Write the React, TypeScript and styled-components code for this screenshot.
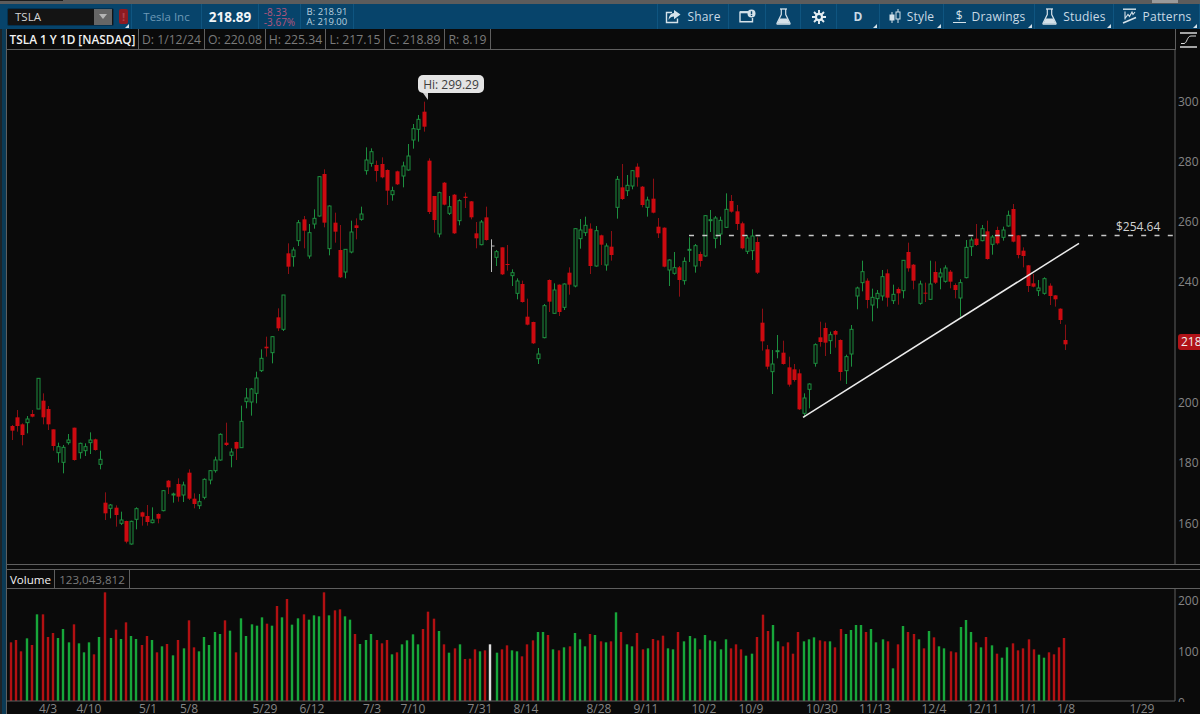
import React from "react";
import styled, { createGlobalStyle } from "styled-components";

type Kind = "g" | "r" | "w";
type CandleRow = [number, Kind, number, number, number, number];
type VolumeRow = [number, Kind, number];

// rows are read off 3x crops: [x, colour, high, body top, body bottom, low]
const scaleCandles = (ox: number, oy: number, rows: CandleRow[]) =>
  rows.map(([x, kind, hi, top, bot, lo]) => ({
    x: Math.round(ox + x / 3) + 0.5,
    kind,
    hi: oy + hi / 3,
    top: oy + top / 3,
    bot: oy + bot / 3,
    lo: oy + lo / 3,
  }));

const scaleVolume = (ox: number, oy: number, rows: VolumeRow[]) =>
  rows.map(([x, kind, top]) => ({
    x: Math.round(ox + x / 3),
    kind,
    top: oy + top / 3,
  }));

const candles = [
  ...scaleCandles(0, 360, [
    [35, "r", 195, 198, 212, 240], [51, "r", 150, 172, 198, 215], [66, "r", 190, 193, 225, 256],
    [82, "g", 168, 177, 188, 220], [97, "r", 150, 162, 170, 172], [113, "g", 55, 55, 147, 147],
    [128, "r", 100, 122, 172, 193], [144, "r", 138, 147, 193, 210], [159, "r", 208, 208, 258, 272],
    [174, "g", 248, 260, 278, 308], [190, "g", 255, 262, 307, 340], [205, "g", 222, 240, 248, 254],
    [221, "r", 203, 203, 300, 302], [239, "g", 248, 250, 278, 296], [254, "g", 250, 260, 272, 288],
    [269, "g", 217, 240, 248, 282], [285, "r", 236, 238, 270, 272], [300, "g", 272, 298, 313, 328],
    [316, "r", 397, 428, 460, 480], [331, "g", 432, 435, 445, 475], [347, "r", 436, 443, 465, 500],
    [362, "g", 455, 480, 490, 495], [378, "r", 482, 483, 545, 550], [393, "g", 482, 484, 552, 554],
    [408, "g", 442, 446, 478, 508], [427, "r", 455, 457, 470, 497], [442, "r", 435, 468, 486, 497],
    [457, "g", 442, 480, 488, 490], [473, "r", 460, 462, 476, 490], [489, "g", 390, 392, 452, 454],
    [504, "r", 360, 362, 382, 402], [519, "g", 398, 402, 405, 428], [534, "r", 355, 372, 410, 425],
    [550, "g", 365, 375, 405, 426], [566, "r", 328, 338, 416, 420], [581, "r", 400, 416, 432, 445],
    [597, "g", 402, 425, 437, 447], [612, "g", 355, 358, 412, 418], [630, "g", 330, 332, 360, 373],
    [646, "g", 290, 300, 332, 338], [661, "g", 220, 223, 300, 302], [677, "r", 188, 248, 255, 258],
    [692, "g", 265, 276, 286, 322], [708, "r", 245, 246, 266, 300], [723, "g", 137, 184, 263, 264],
    [738, "g", 84, 114, 125, 145], [753, "g", 84, 87, 126, 167], [769, "g", 35, 54, 100, 130],
  ]),
  ...scaleCandles(240, 230, [
    [64, "g", 358, 385, 422, 426], [79, "r", 320, 350, 355, 380], [97, "g", 318, 320, 368, 400],
    [113, "r", 235, 262, 295, 303], [128, "g", 195, 195, 298, 303],
  ]),
  ...scaleCandles(220, 70, [
    [204, "r", 520, 550, 590, 612], [220, "g", 532, 540, 560, 590], [235, "g", 450, 458, 512, 528],
    [251, "r", 438, 448, 482, 535], [266, "g", 462, 488, 558, 566], [282, "g", 418, 445, 462, 476],
    [297, "g", 318, 320, 438, 440], [313, "r", 298, 312, 458, 472], [328, "g", 406, 408, 536, 556],
    [344, "r", 428, 458, 485, 518], [360, "r", 465, 540, 622, 624], [376, "g", 538, 538, 606, 625],
    [392, "g", 452, 486, 546, 550], [407, "r", 445, 466, 474, 508], [423, "g", 410, 432, 448, 452],
    [438, "g", 232, 270, 302, 314], [454, "g", 235, 245, 280, 290], [469, "r", 272, 285, 303, 335],
    [485, "r", 262, 282, 322, 325], [500, "r", 298, 300, 362, 405], [515, "g", 350, 362, 374, 392],
    [531, "r", 302, 304, 343, 345], [548, "g", 275, 288, 318, 352], [564, "g", 222, 258, 300, 302],
    [579, "g", 162, 176, 210, 236], [595, "g", 135, 148, 178, 215], [611, "r", 95, 125, 170, 185],
    [627, "r", 265, 272, 426, 432], [642, "r", 378, 378, 450, 488], [657, "g", 365, 368, 492, 502],
    [672, "r", 336, 338, 404, 406], [687, "g", 378, 410, 430, 435], [703, "r", 372, 374, 490, 492],
    [718, "g", 388, 392, 452, 466], [736, "r", 368, 380, 384, 414], [752, "r", 393, 394, 442, 448],
    [767, "r", 456, 490, 505, 535], [783, "g", 450, 456, 524, 526], [798, "r", 410, 442, 510, 512],
  ]),
  ...scaleCandles(480, 150, [
    [33, "w", 268, 288, 288, 366], [49, "g", 300, 305, 322, 348], [65, "r", 292, 292, 373, 375],
    [80, "r", 285, 342, 345, 362], [95, "g", 358, 368, 377, 408], [111, "g", 385, 393, 430, 448],
    [127, "r", 392, 402, 456, 458], [142, "r", 446, 500, 524, 526], [160, "r", 515, 516, 580, 582],
    [175, "g", 594, 612, 626, 642], [191, "g", 462, 467, 563, 565], [206, "r", 388, 390, 455, 486],
    [222, "g", 400, 420, 490, 492], [238, "r", 403, 404, 486, 498], [253, "g", 400, 402, 472, 480],
    [268, "r", 352, 368, 404, 434], [284, "g", 235, 236, 408, 412], [299, "g", 207, 240, 266, 296],
    [315, "g", 200, 226, 248, 258], [330, "r", 220, 236, 348, 372], [348, "g", 228, 242, 348, 350],
    [364, "r", 254, 256, 284, 345], [379, "g", 280, 288, 345, 362], [394, "r", 243, 290, 315, 332],
    [410, "g", 78, 88, 172, 206], [425, "r", 42, 112, 147, 150], [440, "g", 75, 106, 122, 138],
    [456, "g", 60, 62, 108, 118], [471, "r", 40, 50, 82, 110], [487, "r", 108, 110, 165, 172],
    [502, "g", 140, 150, 172, 200], [518, "r", 86, 146, 188, 190], [535, "r", 204, 230, 250, 264],
    [551, "r", 232, 233, 350, 352], [567, "g", 328, 330, 360, 408], [582, "g", 306, 353, 370, 374],
    [597, "r", 348, 352, 390, 440], [613, "g", 322, 334, 392, 404], [628, "g", 262, 298, 301, 336],
    [644, "g", 282, 287, 348, 368], [659, "r", 305, 312, 333, 350], [675, "g", 195, 197, 318, 320],
    [690, "g", 180, 209, 212, 246], [705, "g", 198, 204, 265, 295], [720, "g", 200, 211, 252, 285],
    [738, "g", 130, 178, 232, 234], [754, "r", 135, 153, 185, 188], [770, "r", 165, 184, 222, 240],
    [785, "r", 215, 220, 295, 298], [800, "g", 255, 264, 304, 312], [816, "g", 238, 258, 302, 330],
    [832, "r", 262, 276, 368, 372],
  ]),
  ...scaleCandles(740, 190, [
    [67, "r", 356, 398, 454, 482], [82, "r", 465, 478, 530, 538], [97, "g", 480, 522, 545, 612],
    [112, "g", 435, 482, 484, 505], [128, "r", 452, 488, 522, 524], [147, "r", 500, 532, 584, 590],
    [162, "r", 522, 538, 570, 575], [178, "r", 538, 550, 658, 660], [193, "g", 610, 624, 670, 682],
    [208, "g", 580, 582, 598, 655], [224, "g", 460, 464, 520, 530], [240, "r", 395, 442, 456, 470],
    [255, "r", 398, 414, 458, 498], [270, "g", 425, 434, 452, 492], [286, "r", 420, 423, 434, 473],
    [301, "r", 448, 450, 546, 572], [317, "g", 494, 500, 542, 582], [332, "g", 405, 418, 492, 530],
    [350, "g", 290, 294, 318, 358], [365, "g", 212, 245, 278, 304], [381, "r", 265, 272, 330, 355],
    [396, "g", 296, 322, 345, 394], [411, "g", 300, 310, 326, 355], [427, "g", 240, 260, 318, 332],
    [442, "r", 238, 250, 323, 350], [458, "g", 284, 313, 332, 342], [473, "r", 292, 297, 310, 344],
    [489, "g", 210, 211, 302, 325], [505, "r", 158, 186, 235, 245], [520, "r", 222, 224, 272, 298],
    [539, "g", 272, 282, 340, 344], [554, "r", 278, 308, 310, 336], [569, "g", 212, 282, 328, 330],
    [584, "r", 214, 246, 278, 282], [600, "g", 235, 249, 261, 298], [615, "g", 226, 234, 274, 278],
    [630, "r", 240, 245, 275, 295], [646, "r", 280, 285, 300, 325], [661, "g", 268, 278, 324, 380],
    [677, "g", 150, 172, 263, 265], [692, "g", 142, 150, 170, 198], [708, "r", 102, 146, 165, 168],
    [726, "g", 105, 116, 152, 154], [741, "r", 92, 124, 207, 209], [757, "g", 135, 141, 163, 194],
    [772, "r", 110, 120, 160, 164], [788, "g", 110, 120, 142, 152], [803, "g", 62, 76, 108, 110],
    [819, "r", 42, 57, 155, 157], [835, "r", 135, 136, 195, 205], [850, "r", 172, 182, 198, 232],
    [865, "r", 225, 226, 288, 306], [880, "r", 252, 280, 290, 292],
  ]),
  ...scaleCandles(900, 190, [
    [415, "g", 270, 294, 302, 318], [431, "g", 262, 266, 310, 314], [449, "r", 280, 287, 318, 345],
    [465, "r", 315, 316, 328, 350], [480, "r", 355, 356, 390, 402], [495, "r", 404, 450, 463, 480],
  ]),
];

const volumes = [
  ...scaleVolume(0, 560, [
    [33, "r", 247], [48, "r", 240], [64, "r", 274], [80, "g", 235], [95, "r", 255], [110, "g", 163],
    [129, "r", 163], [144, "r", 231], [160, "r", 219], [175, "g", 234], [190, "g", 207], [206, "g", 247],
    [222, "r", 193], [237, "g", 250], [252, "g", 277], [267, "g", 247], [283, "r", 283], [298, "g", 231],
    [314, "r", 97], [333, "g", 234], [348, "r", 209], [364, "g", 237], [379, "r", 187], [394, "g", 228],
    [409, "g", 237], [425, "r", 255], [440, "r", 228], [455, "g", 240], [471, "r", 277], [487, "g", 259],
    [502, "r", 252], [520, "g", 286], [535, "r", 240], [551, "g", 265], [566, "r", 181], [582, "r", 262],
    [597, "g", 274], [613, "g", 231], [628, "g", 255], [644, "g", 216], [659, "g", 222], [674, "r", 181],
    [690, "g", 212], [708, "r", 277], [724, "g", 175], [739, "g", 228], [755, "g", 193], [770, "g", 197],
    [785, "g", 172], [801, "r", 191], [816, "g", 197], [831, "r", 138], [847, "g", 172], [862, "r", 117],
    [877, "g", 194], [893, "g", 175], [911, "r", 163], [927, "g", 179], [942, "g", 166], [957, "g", 169],
    [973, "r", 97], [988, "g", 166], [1004, "r", 151], [1019, "r", 148], [1035, "g", 169], [1050, "g", 179],
    [1065, "r", 222], [1081, "g", 252], [1099, "g", 240], [1114, "g", 222], [1130, "r", 240], [1145, "r", 250],
    [1161, "r", 240], [1176, "g", 283], [1191, "r", 277],
  ]),
  ...scaleVolume(400, 580, [
    [7, "g", 193], [22, "g", 181], [38, "g", 163], [53, "g", 193], [68, "r", 147], [83, "r", 95],
    [102, "r", 116], [117, "g", 153], [133, "r", 193], [148, "g", 218], [164, "r", 205], [179, "g", 193],
    [195, "r", 237], [210, "r", 236], [226, "r", 208], [241, "g", 214], [256, "r", 211], [271, "w", 193],
    [291, "g", 218], [306, "r", 208], [321, "r", 196], [337, "g", 211], [352, "g", 214], [367, "r", 229],
    [382, "r", 193], [398, "r", 181], [413, "g", 156], [429, "g", 156], [444, "r", 165], [460, "g", 208],
    [478, "r", 211], [493, "g", 202], [509, "r", 199], [524, "g", 159], [539, "g", 178], [555, "g", 199],
    [571, "r", 162], [586, "g", 165], [602, "r", 184], [617, "g", 187], [632, "r", 184], [648, "g", 97],
    [663, "r", 156], [681, "g", 193], [697, "g", 199], [712, "r", 159], [728, "r", 208], [743, "g", 205],
    [758, "r", 177], [773, "r", 181], [789, "r", 167], [804, "g", 205], [820, "g", 208], [835, "r", 156],
    [851, "g", 184], [869, "g", 168], [884, "g", 175], [900, "r", 208], [915, "g", 165], [931, "g", 181],
    [946, "g", 184], [962, "g", 208], [977, "g", 178], [992, "r", 205], [1008, "r", 193], [1023, "r", 208],
    [1038, "g", 227], [1057, "g", 221], [1072, "r", 171], [1088, "r", 104], [1103, "r", 153], [1118, "g", 135],
    [1134, "g", 184], [1149, "r", 199], [1165, "r", 187], [1180, "r", 221], [1195, "r", 156],
  ]),
  ...scaleVolume(800, 580, [
    [11, "g", 184], [26, "g", 178], [41, "g", 172], [60, "r", 181], [76, "r", 184], [91, "g", 184],
    [106, "r", 202], [122, "r", 147], [137, "g", 162], [152, "g", 150], [168, "g", 135], [183, "g", 135],
    [199, "r", 156], [214, "g", 147], [229, "g", 187], [249, "g", 178], [264, "r", 184], [279, "g", 265],
    [295, "r", 193], [310, "g", 138], [325, "r", 156], [341, "r", 162], [356, "g", 178], [371, "r", 205],
    [387, "g", 153], [402, "r", 172], [418, "g", 199], [433, "g", 205], [452, "r", 214], [467, "r", 217],
    [483, "g", 141], [498, "g", 120], [513, "g", 156], [529, "r", 187], [544, "g", 202], [559, "r", 171],
    [575, "g", 196], [590, "r", 221], [605, "g", 233], [621, "g", 202], [640, "r", 190], [655, "r", 211],
    [670, "r", 205], [686, "r", 178], [701, "r", 208], [716, "g", 224], [732, "g", 233], [747, "r", 217],
    [762, "r", 223], [778, "r", 202], [793, "r", 174],
  ]),
];

const priceTicks = [
  { label: "300", y: 101 },
  { label: "280", y: 161 },
  { label: "260", y: 221.5 },
  { label: "240", y: 281.5 },
  { label: "200", y: 402 },
  { label: "180", y: 462 },
  { label: "160", y: 523 },
];

const dates = [
  ["4/3", 48], ["4/10", 89], ["5/1", 148], ["5/8", 189], ["5/29", 265], ["6/12", 312], ["7/3", 372],
  ["7/10", 413], ["7/31", 480], ["8/14", 526], ["8/28", 599], ["9/11", 646], ["10/2", 704], ["10/9", 751],
  ["10/30", 822], ["11/13", 875], ["12/4", 934], ["12/11", 983], ["1/1", 1028], ["1/8", 1066], ["1/29", 1142],
] as const;

const BG = "#0a0a0a";
const GREEN = "#1c8f3f";
const RED = "#cc0a10";
const RED_WICK = "#8a1014";
const LINE = "#5f5f5f";
const FONT = `"Open Sans", "Noto Sans", sans-serif`;

const GlobalStyle = createGlobalStyle`
  html, body {
    margin: 0;
    background: ${BG};
    overflow: hidden;
  }
  * {
    box-sizing: border-box;
  }
`;

const Page = styled.div`
  width: 1200px;
  height: 714px;
  display: flex;
  flex-direction: column;
  overflow: hidden;
  background: ${BG};
  font-family: ${FONT};
`;

const TopStrip = styled.div`
  height: 4px;
  display: flex;
  justify-content: space-between;
  background: #5c5c5c;
`;

const StripTab = styled.div<{ $light?: boolean }>`
  width: ${(p) => (p.$light ? "26px" : "63px")};
  height: ${(p) => (p.$light ? "3px" : "1px")};
  margin-right: ${(p) => (p.$light ? "22px" : "0")};
  background: ${(p) => (p.$light ? "#9a9a9a" : "#1c1c1c")};
`;

const Toolbar = styled.div`
  height: 25px;
  display: flex;
  background: #07446b;
  color: #c9dae5;
`;

const Group = styled.div<{ $w: number; $gap?: number; $pad?: number }>`
  position: relative;
  width: ${(p) => p.$w}px;
  display: flex;
  align-items: center;
  justify-content: ${(p) => (p.$pad === undefined ? "center" : "flex-start")};
  gap: ${(p) => p.$gap ?? 6}px;
  padding-left: ${(p) => p.$pad ?? 0}px;
  border-right: 1px solid #0f5580;
`;

const ToolLabel = styled.span`
  font-size: 12px;
  letter-spacing: 0.2px;
  white-space: nowrap;
`;

const Corner = styled.i`
  position: absolute;
  right: 2px;
  bottom: 1px;
  width: 0;
  height: 0;
  border-left: 4px solid transparent;
  border-bottom: 4px solid #d5e2ea;
`;

const SymbolBox = styled.div`
  width: 107px;
  height: 18px;
  margin-left: 7px;
  display: flex;
  align-items: center;
  justify-content: space-between;
  padding: 0 1px 0 7px;
  background: #141414;
  border: 1px solid #033150;
  border-radius: 2px;
  color: #d4d4d4;
  font-size: 11.5px;
`;

const DropButton = styled.span`
  width: 18px;
  height: 16px;
  display: flex;
  align-items: center;
  justify-content: center;
  background: #666;
  &::after {
    content: "";
    border-left: 4px solid transparent;
    border-right: 4px solid transparent;
    border-top: 5px solid #b5b5b5;
  }
`;

const AlertFlag = styled.span`
  width: 9px;
  height: 15px;
  margin-left: 5px;
  display: flex;
  align-items: center;
  justify-content: center;
  background: #8e1b22;
  border-radius: 2px;
  color: #b04048;
  font-size: 11px;
  font-weight: 700;
`;

const CompanyName = styled.span`
  color: #6d99b6;
  font-size: 11.5px;
  white-space: nowrap;
`;

const LastPrice = styled.span`
  color: #f1f5f7;
  font-size: 13.5px;
  font-weight: 700;
`;

const Stack = styled.span<{ $down?: boolean }>`
  display: flex;
  flex-direction: column;
  color: ${(p) => (p.$down ? "#b4567c" : "#b9d0df")};
  font-size: ${(p) => (p.$down ? "10px" : "9.5px")};
  line-height: 10px;
  white-space: nowrap;
`;

const DollarMark = styled.span`
  width: 13px;
  border-bottom: 1.5px solid #d5e2ea;
  color: #d5e2ea;
  font-size: 12px;
  line-height: 12px;
  text-align: center;
`;

const Body = styled.div`
  flex: 1;
  display: flex;
  min-height: 0;
`;

const LeftRail = styled.div`
  width: 7px;
  background: #0b3a55;
  border-left: 2px solid #1e2428;
  border-right: 1px solid ${LINE};
`;

const Panels = styled.div`
  flex: 1;
  display: flex;
  flex-direction: column;
  min-width: 0;
`;

const InfoRow = styled.div<{ $h: number; $top?: boolean; $size: number }>`
  height: ${(p) => p.$h}px;
  display: flex;
  border-bottom: 1px solid ${LINE};
  border-top: ${(p) => (p.$top ? `1px solid ${LINE}` : "0")};
  font-size: ${(p) => p.$size}px;
`;

const Cell = styled.div<{ $w: number; $bright?: boolean; $strong?: boolean }>`
  width: ${(p) => p.$w}px;
  display: flex;
  align-items: center;
  justify-content: center;
  border-right: 1px solid ${LINE};
  color: ${(p) => (p.$bright ? "#f2f2f2" : "#7b7b7b")};
  font-size: ${(p) => (p.$strong ? "11.8px" : "inherit")};
  font-weight: ${(p) => (p.$strong ? 600 : 400)};
  white-space: nowrap;
`;

const CornerCell = styled.div`
  width: 25px;
  margin-left: auto;
  margin-bottom: -1px;
  display: flex;
  align-items: center;
  justify-content: center;
  background: ${BG};
  border-left: 1px solid ${LINE};
`;

const PricePane = styled.div`
  position: relative;
  height: 514px;
  overflow: hidden;
`;

const PanelGap = styled.div`
  height: 5px;
  border-top: 1px solid ${LINE};
`;

const ChartSvg = styled.svg`
  display: block;
  font-family: ${FONT};
`;

const HiBubble = styled.div`
  position: absolute;
  left: 411px;
  top: 25px;
  width: 66px;
  height: 18px;
  display: flex;
  align-items: center;
  justify-content: center;
  background: #e4e4e4;
  border-radius: 5px;
  color: #3d3d3d;
  font-size: 12px;
  &::after {
    content: "";
    position: absolute;
    left: 5px;
    top: 18px;
    border-right: 5px solid #d0d0d0;
    border-bottom: 7px solid transparent;
  }
`;

const StudyLabel = styled.div`
  position: absolute;
  left: 1109px;
  top: 168px;
  color: #d2d2d2;
  font-size: 12px;
  line-height: 18px;
`;

const PriceTag = styled.div`
  position: absolute;
  left: 1171px;
  top: 284px;
  width: 22px;
  height: 16px;
  padding-left: 3px;
  background: #b11318;
  border-radius: 3px 0 0 3px;
  color: #f0f0f0;
  font-size: 12px;
  line-height: 16px;
`;

const ShareIcon = () => (
  <svg width="16" height="15" viewBox="0 0 16 15" fill="none">
    <path d="M7 3.5H1.5v10h11V9.5" stroke="#d5e2ea" strokeWidth="1.4" />
    <path d="M9 1l6.5 4.6L9 10.2V7.6C6.8 7.6 5 8.6 3.6 11c.2-4 2-6.6 5.4-7z" fill="#d5e2ea" />
  </svg>
);

const NoticeIcon = () => (
  <svg width="17" height="15" viewBox="0 0 17 15" fill="none">
    <path d="M9 3.2H1v9.6h12.5V9" stroke="#d5e2ea" strokeWidth="1.4" />
    <path d="M1 3.2h8" stroke="#d5e2ea" strokeWidth="2.2" />
    <circle cx="12.5" cy="4.6" r="4" fill="#d5e2ea" />
    <path d="M12.5 2.2v3M12.5 6v1" stroke="#07446b" strokeWidth="1.4" />
  </svg>
);

const FlaskIcon = () => (
  <svg width="15" height="17" viewBox="0 0 15 17" fill="none">
    <path d="M4 1h7" stroke="#d5e2ea" strokeWidth="1.3" />
    <path d="M5.3 1v5.5L1 15.2c-.2.5 0 .9.6.9h11.8c.6 0 .8-.4.6-.9L9.7 6.5V1" stroke="#d5e2ea" strokeWidth="1.2" />
    <path d="M3.6 10.5h7.8l2.3 5.2H1.3z" fill="#d5e2ea" />
  </svg>
);

const GearIcon = () => (
  <svg width="14" height="14" viewBox="0 0 14 14" fill="none">
    <g stroke="#e4edf2" strokeWidth="1.9">
      <path d="M7 0v14M0 7h14M2 2l10 10M12 2L2 12" />
    </g>
    <circle cx="7" cy="7" r="4.2" fill="#e4edf2" />
    <circle cx="7" cy="7" r="2" fill="#07446b" />
  </svg>
);

const CandlesIcon = () => (
  <svg width="12" height="15" viewBox="0 0 12 15" fill="none">
    <path d="M3 3v11" stroke="#d5e2ea" strokeWidth="1" />
    <rect x="0.5" y="5.5" width="5" height="6" fill="#d5e2ea" />
    <path d="M9 0v14" stroke="#d5e2ea" strokeWidth="1" />
    <rect x="7" y="3" width="4" height="7" fill="#07446b" stroke="#d5e2ea" />
  </svg>
);

const PatternsIcon = () => (
  <svg width="15" height="17" viewBox="0 0 15 17" fill="none" stroke="#d5e2ea">
    <path d="M1 1.2h13" strokeWidth="1.4" />
    <path d="M3 11.5V3.5M3 10.5l3-4 1.5 2L10 4l1 2.5L13 4" strokeWidth="1.1" />
    <path d="M1 15l13-5.5" strokeWidth="1.6" />
  </svg>
);

const ScaleIcon = () => (
  <svg width="17" height="16" viewBox="0 0 17 16" fill="none" stroke="#d8d8d8">
    <path d="M0 1h17M0 15h17" strokeWidth="1.4" />
    <path d="M1 11.5h3c3 0 3-7.5 7-7.5h5" strokeWidth="1" />
  </svg>
);

const Candles = () => (
  <>
    {candles.map((c) => {
      const color = c.kind === "g" ? GREEN : c.kind === "r" ? RED : "#b9b9b9";
      const wick = c.kind === "r" ? RED_WICK : color;
      if (c.kind === "w") {
        return (
          <path
            key={c.x}
            d={`M${c.x} ${c.hi}V${c.lo}M${c.x} ${c.top}h3`}
            stroke={color}
            strokeWidth="1"
          />
        );
      }
      const h = Math.max(c.bot - c.top, 1);
      return (
        <g key={c.x}>
          <path d={`M${c.x} ${c.hi}V${c.lo}`} stroke={wick} strokeWidth="1" />
          {c.kind === "g" ? (
            <rect x={c.x - 1.5} y={c.top} width="3" height={h} fill={BG} stroke={color} strokeWidth="1" />
          ) : (
            <rect x={c.x - 2} y={c.top} width="4" height={h} fill={color} />
          )}
        </g>
      );
    })}
  </>
);

const PriceChart = () => (
  <ChartSvg width="1193" height="514" viewBox="7 50 1193 514">
    <Candles />
    <path d="M1175 50V564" stroke={LINE} strokeWidth="1" />
    <path d="M689 235.5H1175" stroke="#c8c8c8" strokeWidth="1.6" strokeDasharray="5 8.3" />
    <path d="M803 417.3L1079 243.3" stroke="#ececec" strokeWidth="1.5" />
    {priceTicks.map((t) => (
      <text key={t.label} x="1178" y={t.y + 4.5} fill="#858585" fontSize="12">
        {t.label}
      </text>
    ))}
  </ChartSvg>
);

const VolumeChart = () => (
  <ChartSvg width="1193" height="125" viewBox="7 589 1193 125">
    <clipPath id="volume-axis">
      <rect x="1176" y="589" width="24" height="113" />
    </clipPath>
    {volumes.map((v) => (
      <rect
        key={v.x}
        x={v.x - 1.2}
        y={v.top}
        width="2.4"
        height={701 - v.top}
        fill={v.kind === "g" ? "#17a63a" : v.kind === "r" ? "#b21012" : "#e0e0e0"}
      />
    ))}
    <path d="M7 701H1175M1175 589V701" stroke={LINE} strokeWidth="1" />
    <text x="1178" y="604.5" fill="#858585" fontSize="12">200</text>
    <text x="1178" y="656" fill="#858585" fontSize="12">100</text>
    <text x="1178" y="707" fill="#858585" fontSize="12" clipPath="url(#volume-axis)">0</text>
    {dates.map(([label, x]) => (
      <text key={label} x={x} y="713" fill="#858585" fontSize="12" textAnchor="middle">
        {label}
      </text>
    ))}
  </ChartSvg>
);

export default function App() {
  return (
    <>
      <GlobalStyle />
      <Page>
        <TopStrip>
          <StripTab />
          <StripTab $light />
        </TopStrip>
        <Toolbar>
          <Group $w={132} $gap={0} $pad={0}>
            <SymbolBox>
              TSLA
              <DropButton />
            </SymbolBox>
            <AlertFlag>!</AlertFlag>
            <Corner />
          </Group>
          <Group $w={70}>
            <CompanyName>Tesla Inc</CompanyName>
          </Group>
          <Group $w={57}>
            <LastPrice>218.89</LastPrice>
          </Group>
          <Group $w={42}>
            <Stack $down>
              <span>-8.33</span>
              <span>-3.67%</span>
            </Stack>
          </Group>
          <Group $w={53}>
            <Stack>
              <span>B: 218.91</span>
              <span>A: 219.00</span>
            </Stack>
          </Group>
          <Group $w={304} />
          <Group $w={71}>
            <ShareIcon />
            <ToolLabel>Share</ToolLabel>
          </Group>
          <Group $w={37}>
            <NoticeIcon />
          </Group>
          <Group $w={35}>
            <FlaskIcon />
          </Group>
          <Group $w={36}>
            <GearIcon />
          </Group>
          <Group $w={43}>
            <ToolLabel as="b">D</ToolLabel>
            <Corner />
          </Group>
          <Group $w={64}>
            <CandlesIcon />
            <ToolLabel>Style</ToolLabel>
            <Corner />
          </Group>
          <Group $w={91}>
            <DollarMark>$</DollarMark>
            <ToolLabel>Drawings</ToolLabel>
            <Corner />
          </Group>
          <Group $w={79}>
            <FlaskIcon />
            <ToolLabel>Studies</ToolLabel>
            <Corner />
          </Group>
          <Group $w={86}>
            <PatternsIcon />
            <ToolLabel>Patterns</ToolLabel>
            <Corner />
          </Group>
        </Toolbar>
        <Body>
          <LeftRail />
          <Panels>
            <InfoRow $h={21} $size={12.2}>
              <Cell $w={132} $bright $strong>TSLA 1 Y 1D [NASDAQ]</Cell>
              <Cell $w={66}>D: 1/12/24</Cell>
              <Cell $w={61}>O: 220.08</Cell>
              <Cell $w={60}>H: 225.34</Cell>
              <Cell $w={59}>L: 217.15</Cell>
              <Cell $w={60}>C: 218.89</Cell>
              <Cell $w={46}>R: 8.19</Cell>
              <CornerCell>
                <ScaleIcon />
              </CornerCell>
            </InfoRow>
            <PricePane>
              <PriceChart />
              <HiBubble>Hi: 299.29</HiBubble>
              <StudyLabel>$254.64</StudyLabel>
              <PriceTag>218</PriceTag>
            </PricePane>
            <PanelGap />
            <InfoRow $h={20} $top $size={11.6}>
              <Cell $w={48} $bright>Volume</Cell>
              <Cell $w={75}>123,043,812</Cell>
            </InfoRow>
            <VolumeChart />
          </Panels>
        </Body>
      </Page>
    </>
  );
}
